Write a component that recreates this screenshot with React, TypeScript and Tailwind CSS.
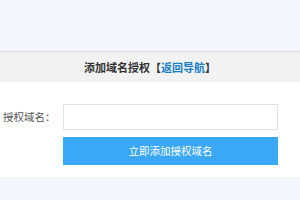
export default function App() {
  return (
    <div
      className="w-[300px] h-[200px] flex flex-col bg-[#f3f7fc] overflow-hidden"
      style={{ fontFamily: '"Noto Sans CJK SC", "Liberation Sans", sans-serif' }}
    >
      {/* top strip */}
      <div className="h-[52px] shrink-0 border-b border-[#dcdcdc]" />

      {/* title bar */}
      <div className="h-[30px] shrink-0 bg-[#f2f2f2] flex items-center justify-center text-[11px] font-bold text-[#333]">
        添加域名授权【<a className="text-[#1b7fc6]">返回导航</a>】
      </div>

      {/* form */}
      <div className="h-[95px] shrink-0 bg-white flex flex-col pt-[22px]">
        <div className="flex items-center">
          <label className="w-[63px] pl-[3px] text-[10.5px] text-[#555]">授权域名：</label>
          <input
            type="text"
            className="w-[215px] h-[26px] border border-[#e2e2e2] bg-white outline-none"
          />
        </div>
        <div className="flex mt-[7px]">
          <div className="w-[63px]" />
          <button className="w-[215px] h-[28px] bg-[#3aa8f5] text-white text-[10.5px]">
            立即添加授权域名
          </button>
        </div>
      </div>

      <div className="flex-1" />
    </div>
  )
}
